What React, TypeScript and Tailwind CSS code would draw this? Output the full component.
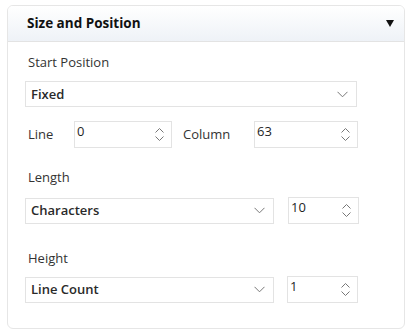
import React from "react";

const font = { fontFamily: '"Open Sans", "Noto Sans", sans-serif' };

function Chevron() {
  return (
    <svg width="11" height="7" viewBox="0 0 11 7" className="shrink-0">
      <path d="M0.5 0.8 L5.5 5.8 L10.5 0.8" fill="none" stroke="#777" strokeWidth="1" />
    </svg>
  );
}

function Spinner() {
  return (
    <div className="flex flex-col items-center gap-[3px] shrink-0">
      <svg width="9" height="5" viewBox="0 0 9 5">
        <path d="M0.5 4.5 L4.5 0.5 L8.5 4.5" fill="none" stroke="#777" strokeWidth="1" />
      </svg>
      <svg width="9" height="5" viewBox="0 0 9 5">
        <path d="M0.5 0.5 L4.5 4.5 L8.5 0.5" fill="none" stroke="#777" strokeWidth="1" />
      </svg>
    </div>
  );
}

function Select({ value, className }: { value: string; className: string }) {
  return (
    <div className={`flex items-center justify-between border border-[#e3e3e3] bg-white pl-[5px] pr-[8px] ${className}`}>
      <span className="text-[13px] font-semibold text-[#2a2a2a] leading-none">{value}</span>
      <Chevron />
    </div>
  );
}

function NumberInput({ value, className }: { value: string; className: string }) {
  return (
    <div className={`flex items-center justify-between border border-[#e3e3e3] bg-white pl-[2px] pr-[7px] ${className}`}>
      <span className="text-[13px] text-[#1f1f1f] leading-none -mt-[6px]">{value}</span>
      <Spinner />
    </div>
  );
}

export default function App() {
  return (
    <div className="w-[412px] h-[334px] bg-white pt-[5px] pl-[7px]" style={font}>
      <div className="w-[398px] h-[324px] border border-[#e6e6e6] rounded-[6px] overflow-hidden bg-white">
        <div className="h-[36px] border-b border-[#e3e3e3] bg-gradient-to-b from-white to-[#eef2f7] flex items-center justify-between pl-[19px] pr-[10px]">
          <span className="text-[13.5px] font-bold text-[#111] leading-none">Size and Position</span>
          <svg width="8" height="7" viewBox="0 0 8 7">
            <polygon points="0,0 8,0 4,7" fill="#111" />
          </svg>
        </div>
        <div className="pl-[17px] pt-[12px] flex flex-col">
          <div className="h-[18px] flex items-center pl-[3px] text-[13px] text-[#333]">Start Position</div>
          <Select value="Fixed" className="mt-[9px] w-[332px] h-[26px]" />
          <div className="mt-[14px] flex items-center h-[27px]">
            <span className="w-[49px] pl-[3px] text-[13px] text-[#333]">Line</span>
            <NumberInput value="0" className="w-[98px] h-[27px]" />
            <span className="w-[82px] pl-[11px] text-[13px] text-[#333]">Column</span>
            <NumberInput value="63" className="w-[104px] h-[27px]" />
          </div>
          <div className="mt-[21px] h-[18px] flex items-center pl-[3px] text-[13px] text-[#333]">Length</div>
          <div className="mt-[10px] flex items-center gap-[14px]">
            <Select value="Characters" className="w-[249px] h-[26px]" />
            <NumberInput value="10" className="w-[71px] h-[27px]" />
          </div>
          <div className="mt-[26px] h-[18px] flex items-center pl-[3px] text-[13px] text-[#333]">Height</div>
          <div className="mt-[8px] flex items-center gap-[13px]">
            <Select value="Line Count" className="w-[249px] h-[26px]" />
            <NumberInput value="1" className="w-[71px] h-[27px]" />
          </div>
        </div>
      </div>
    </div>
  );
}
